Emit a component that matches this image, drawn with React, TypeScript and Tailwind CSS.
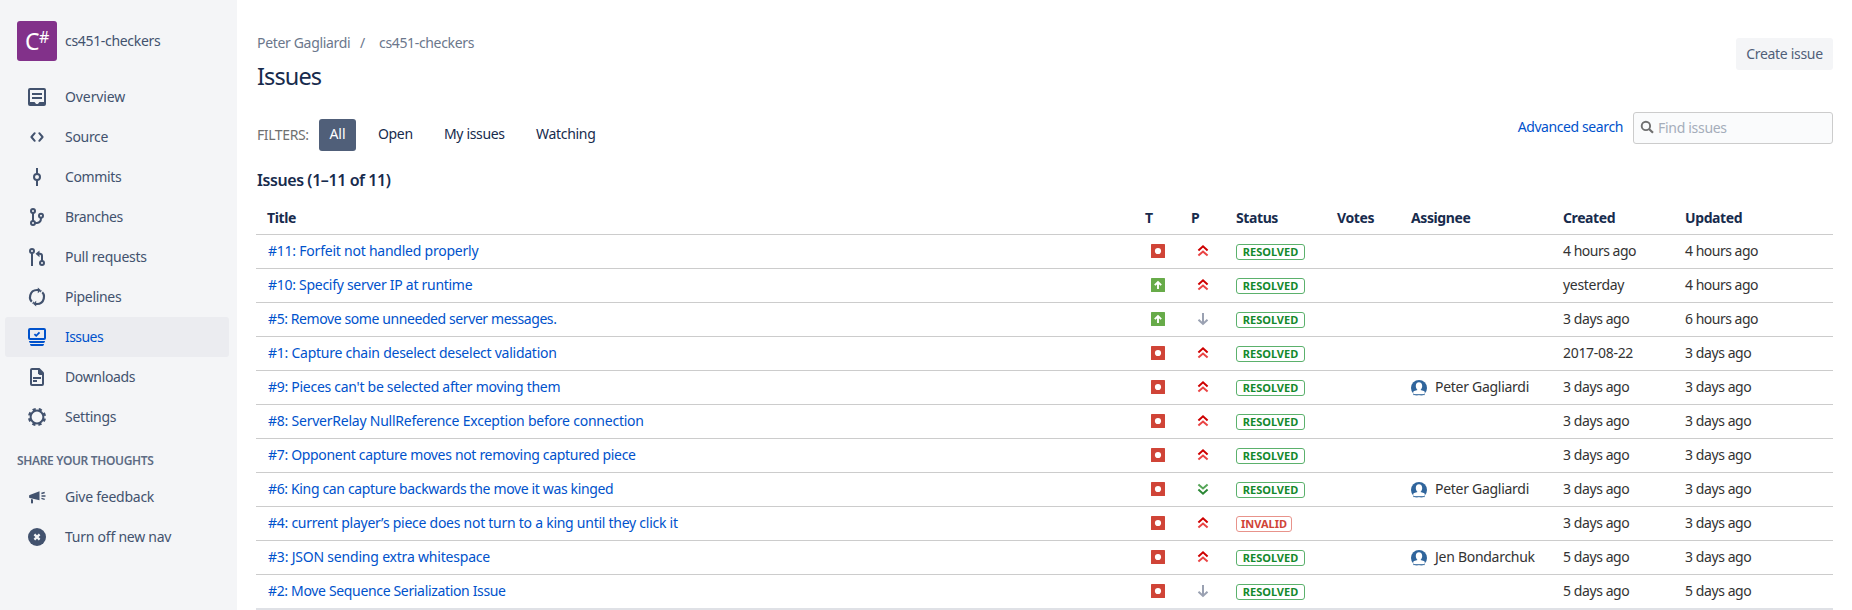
import type { ReactNode } from "react";

type Kind = "bug" | "enhancement";
type Priority = "major" | "minor" | "low";

interface Issue {
  title: string;
  kind: Kind;
  priority: Priority;
  status: "RESOLVED" | "INVALID";
  assignee?: string;
  created: string;
  updated: string;
  tracking: string;
}

const issues: Issue[] = [
  { title: "#11: Forfeit not handled properly", kind: "bug", priority: "major", status: "RESOLVED", created: "4 hours ago", updated: "4 hours ago", tracking: "tracking-[-0.23px]" },
  { title: "#10: Specify server IP at runtime", kind: "enhancement", priority: "major", status: "RESOLVED", created: "yesterday", updated: "4 hours ago", tracking: "tracking-[-0.28px]" },
  { title: "#5: Remove some unneeded server messages.", kind: "enhancement", priority: "minor", status: "RESOLVED", created: "3 days ago", updated: "6 hours ago", tracking: "tracking-[-0.41px]" },
  { title: "#1: Capture chain deselect deselect validation", kind: "bug", priority: "major", status: "RESOLVED", created: "2017-08-22", updated: "3 days ago", tracking: "tracking-[-0.25px]" },
  { title: "#9: Pieces can't be selected after moving them", kind: "bug", priority: "major", status: "RESOLVED", assignee: "Peter Gagliardi", created: "3 days ago", updated: "3 days ago", tracking: "tracking-[-0.28px]" },
  { title: "#8: ServerRelay NullReference Exception before connection", kind: "bug", priority: "major", status: "RESOLVED", created: "3 days ago", updated: "3 days ago", tracking: "tracking-[-0.23px]" },
  { title: "#7: Opponent capture moves not removing captured piece", kind: "bug", priority: "major", status: "RESOLVED", created: "3 days ago", updated: "3 days ago", tracking: "tracking-[-0.32px]" },
  { title: "#6: King can capture backwards the move it was kinged", kind: "bug", priority: "low", status: "RESOLVED", assignee: "Peter Gagliardi", created: "3 days ago", updated: "3 days ago", tracking: "tracking-[-0.35px]" },
  { title: "#4: current player’s piece does not turn to a king until they click it", kind: "bug", priority: "major", status: "INVALID", created: "3 days ago", updated: "3 days ago", tracking: "tracking-[-0.26px]" },
  { title: "#3: JSON sending extra whitespace", kind: "bug", priority: "major", status: "RESOLVED", assignee: "Jen Bondarchuk", created: "5 days ago", updated: "3 days ago", tracking: "tracking-[-0.2px]" },
  { title: "#2: Move Sequence Serialization Issue", kind: "bug", priority: "minor", status: "RESOLVED", created: "5 days ago", updated: "5 days ago", tracking: "tracking-[-0.34px]" },
];

const line = { fill: "none", stroke: "currentColor", strokeWidth: 2 } as const;

const navIcons: Record<string, ReactNode> = {
  overview: (
    <>
      <path fillRule="evenodd" fill="currentColor" d="M5 3h14a2 2 0 0 1 2 2v14a2 2 0 0 1-2 2H5a2 2 0 0 1-2-2V5a2 2 0 0 1 2-2zm0 2v12h4.200c.5 0 .8.3 1 .7.3.8 1 1.300 1.800 1.300s1.500-.5 1.800-1.300c.2-.4.5-.7 1-.7H19V5z" />
      <path {...line} d="M7 9h10M7 13h10" />
    </>
  ),
  source: <path {...line} strokeLinecap="round" strokeLinejoin="round" d="M9.700 8.200 6.400 12l3.300 3.800M14.300 8.200 17.600 12l-3.300 3.800" />,
  commits: (
    <>
      <circle {...line} cx="12" cy="12" r="3" />
      <path {...line} d="M12 3v6M12 15v6" />
    </>
  ),
  branches: (
    <>
      <circle {...line} cx="8" cy="6" r="2" />
      <circle {...line} cx="8" cy="18" r="2" />
      <circle {...line} cx="16" cy="10.800" r="2" />
      <path {...line} d="M8 8v8M16 13c0 3-1.300 4.800-4 4.900L10 18" />
    </>
  ),
  pulls: (
    <>
      <circle {...line} cx="7" cy="6" r="2" />
      <circle {...line} cx="17" cy="18" r="2" />
      <path {...line} d="M7 8v13M17 16v-5c0-1.500-.8-2.200-2.200-2.200H13" />
      <path fill="currentColor" d="M10.500 8.800 14.500 5.400v6.800z" />
    </>
  ),
  pipelines: (
    <>
      <path {...line} strokeWidth="2.200" d="M8.600 18.100A7 7 0 0 1 12 5h1M15.400 5.900A7 7 0 0 1 12 19h-1" />
      <path fill="currentColor" d="M16 5.200 12.800 2.400v5.800zM8 18.800l3.200-3v5.800z" />
      <path stroke="#f4f5f7" strokeWidth="1.300" d="m16 7.900 2.200-3M8 16.100l-2.200 3" />
    </>
  ),
  issues: (
    <>
      <rect {...line} x="4" y="4" width="16" height="10" rx="1" />
      <path {...line} strokeWidth="1.800" d="m9.400 9.100 1.800 1.700 3.300-3.500" />
      <path fill="currentColor" d="M4 16h16c0 1.200-.6 2-1.500 2h-13C4.600 18 4 17.200 4 16zM5 19h14c0 1.200-.7 2-1.500 2h-11C5.700 21 5 20.200 5 19z" />
    </>
  ),
  downloads: (
    <>
      <path {...line} strokeLinejoin="round" d="M13 4H7a1 1 0 0 0-1 1v14a1 1 0 0 0 1 1h10a1 1 0 0 0 1-1V9" />
      <path fill="currentColor" d="M13 3h1.500L19 7.500V10h-4.500L13 8.500z" />
      <path {...line} strokeLinecap="butt" d="M8 13h8M8 16h4" />
    </>
  ),
  settings: (
    <>
      <circle {...line} strokeWidth="2" cx="12" cy="12" r="6.400" />
      <circle {...line} strokeWidth="2.400" cx="12" cy="12" r="7.900" strokeDasharray="3.200 3.004" strokeDashoffset="-1.500" />
    </>
  ),
  feedback: (
    <>
      <path fill="currentColor" d="M14.500 6.200v9L4.700 13a.8.8 0 0 1-.6-.8v-1.400c0-.4.2-.7.6-.8zM6 14l2 .5v3.300a.8.8 0 0 1-.8.8H6.800a.8.8 0 0 1-.8-.8z" />
      <path {...line} strokeWidth="1.400" d="M16.500 11h4M16.400 8.500l3.300-1M16.400 13.400l3.300 1" />
    </>
  ),
  off: (
    <>
      <circle cx="12" cy="12" r="9" fill="currentColor" />
      <path d="m9.400 9.400 5.200 5.200m0-5.200-5.200 5.200" stroke="#f4f5f7" strokeWidth="2.200" fill="none" />
    </>
  ),
};

function NavItem({ icon, label, active, tracking }: { icon: string; label: string; active?: boolean; tracking: string }) {
  return (
    <a className={`ml-[5px] flex h-10 w-56 items-center rounded-[3px] pl-5 ${active ? "bg-[#ebecf0] text-[#0052cc]" : "text-[#42526e]"}`}>
      <svg viewBox="0 0 24 24" className="h-6 w-6 shrink-0">{navIcons[icon]}</svg>
      <span className={`ml-4 whitespace-nowrap leading-5 ${tracking}`}>{label}</span>
    </a>
  );
}

function KindIcon({ kind }: { kind: Kind }) {
  return (
    <svg viewBox="0 0 14 14" className="mt-[9px] ml-[6px] h-3.5 w-3.5">
      <rect width="14" height="14" rx="0.600" fill={kind === "bug" ? "#d04437" : "#67ab49"} />
      {kind === "bug" ? (
        <circle cx="7" cy="7" r="3.100" fill="#fff" />
      ) : (
        <path d="M7 11V4.500M3.800 7.200 7 4l3.200 3.200" fill="none" stroke="#fff" strokeWidth="1.900" />
      )}
    </svg>
  );
}

function PriorityIcon({ priority }: { priority: Priority }) {
  return (
    <svg viewBox="0 0 16 16" className="mt-2 ml-1 h-4 w-4" fill="none" strokeWidth="2">
      {priority === "major" && (
        <>
          <path d="M3.400 7.400 8 3.300l4.600 4.100" stroke="#ce0000" />
          <path d="M3.400 12.600 8 8.500l4.600 4.100" stroke="#ea4444" />
        </>
      )}
      {priority === "low" && (
        <>
          <path d="M3.400 3.400 8 7.500l4.600-4.100" stroke="#55a557" />
          <path d="M3.400 8.600 8 12.700l4.600-4.100" stroke="#2a8735" />
        </>
      )}
      {priority === "minor" && <path d="M8 2v11M3.500 8.800 8 13l4.500-4.200" stroke="#9aa1b2" />}
    </svg>
  );
}

function Avatar() {
  return (
    <svg viewBox="0 0 16 16" className="mt-[9px] h-4 w-4 shrink-0">
      <circle cx="8" cy="8" r="8" fill="#30659c" />
      <path fill="#fff" d="M8 2.300c2 0 3.200 1.500 3.200 3.600 0 1.700-.8 3.200-1.700 4l3.300 1.200c.7.300 1 .8 1 1.500v.9A8 8 0 0 1 8 16a8 8 0 0 1-5.800-2.500v-.9c0-.7.300-1.200 1-1.500l3.300-1.200c-.9-.8-1.700-2.300-1.700-4 0-2.100 1.200-3.600 3.200-3.600z" />
      <path d="M2.200 14.600h11.600" stroke="#30659c" strokeWidth="0.900" />
    </svg>
  );
}

function dateTracking(text: string) {
  if (text.includes("hours")) return "tracking-[-0.5px]";
  return text.includes("days") ? "tracking-[-0.42px]" : "tracking-[-0.3px]";
}

const columns = "grid grid-cols-[889px_46px_45px_101px_74px_152px_122px_148px] whitespace-nowrap";

export default function App() {
  return (
    <div className="flex h-[610px] w-[1852px] overflow-hidden bg-white font-['Noto_Sans',sans-serif] text-sm leading-5">
      <nav className="h-full w-[237px] shrink-0 bg-[#f4f5f7] pt-[21px]">
        <div className="ml-[17px] flex h-10 items-center text-[#42526e]">
          <div className="relative h-10 w-10 rounded-[3px] bg-[#82318a] text-white">
            <span className="absolute top-[5px] left-[8px] text-[23px] leading-[30px]">C</span>
            <span className="absolute top-[6px] left-[22px] text-[16px] leading-[20px] tracking-[-1px]">#</span>
          </div>
          <span className="ml-2 tracking-[-0.32px]">cs451-checkers</span>
        </div>
        <div className="mt-4">
          <NavItem icon="overview" label="Overview" tracking="tracking-[-0.1px]" />
          <NavItem icon="source" label="Source" tracking="tracking-[-0.3px]" />
          <NavItem icon="commits" label="Commits" tracking="tracking-[-0.35px]" />
          <NavItem icon="branches" label="Branches" tracking="tracking-[-0.4px]" />
          <NavItem icon="pulls" label="Pull requests" tracking="tracking-[-0.25px]" />
          <NavItem icon="pipelines" label="Pipelines" tracking="tracking-[-0.3px]" />
          <NavItem icon="issues" label="Issues" active tracking="tracking-[-0.55px]" />
          <NavItem icon="downloads" label="Downloads" tracking="tracking-[-0.35px]" />
          <NavItem icon="settings" label="Settings" tracking="tracking-[-0.25px]" />
        </div>
        <div className="flex h-10 items-end pb-[6px] pl-[17px] text-xs leading-5 font-semibold tracking-[-0.34px] text-[#5e6c84]">SHARE YOUR THOUGHTS</div>
        <NavItem icon="feedback" label="Give feedback" tracking="tracking-[-0.25px]" />
        <NavItem icon="off" label="Turn off new nav" tracking="tracking-[-0.24px]" />
      </nav>

      <main className="ml-[19px] w-[1577px]">
        <header className="flex h-[110px] justify-between">
          <div className="pt-[33px]">
            <div className="flex text-[#6b778c]">
              <span className="w-[104px] pl-[1px] tracking-[-0.33px]">Peter Gagliardi</span>
              <span className="w-[19px]">/</span>
              <span className="tracking-[-0.34px]">cs451-checkers</span>
            </div>
            <h1 className="mt-[7px] pl-[1px] text-[23.5px] leading-8 tracking-[-0.9px] text-[#172b4d]">Issues</h1>
          </div>
          <button className="mt-[38px] h-8 w-[97px] rounded-[3px] bg-[#f4f5f7] tracking-[-0.3px] text-[#505f79]">Create issue</button>
        </header>

        <div className="flex h-[57px] justify-between">
          <div className="flex pt-[9px] text-[#172b4d]">
            <span className="mt-[6px] w-[63px] pl-[1px] tracking-[-0.4px] text-[#707070]">FILTERS:</span>
            <span className="h-8 w-[37px] rounded-[3px] bg-[#505f79] pt-[5px] text-center text-white">All</span>
            <span className="w-[66px] pt-[5px] pl-[22px] tracking-[-0.35px]">Open</span>
            <span className="w-[92px] pt-[5px] pl-[22px] tracking-[-0.35px]">My issues</span>
            <span className="pt-[5px] pl-[22px] tracking-[-0.3px]">Watching</span>
          </div>
          <div className="flex pt-[2px]">
            <a className="mt-[5px] mr-[10px] tracking-[-0.4px] text-[#0052cc]">Advanced search</a>
            <div className="flex h-8 w-[200px] rounded-[3px] border border-[#ccc] bg-[#fafbfc] text-[#a5adba]">
              <svg viewBox="0 0 14 14" className="mt-[7px] ml-[6px] h-3.5 w-3.5 shrink-0" fill="none" stroke="#707070" strokeWidth="1.900">
                <circle cx="5.900" cy="5.900" r="4.200" />
                <path d="m9 9 4 3.800" strokeWidth="2.200" />
              </svg>
              <span className="mt-[5px] ml-[4px] tracking-[-0.3px]">Find issues</span>
            </div>
          </div>
        </div>

        <h2 className="h-[41px] pt-[3px] pl-[1px] text-base leading-5 font-semibold tracking-[-0.42px] text-[#172b4d]">Issues (1–11 of 11)</h2>

        <div className="border-b-2 border-[#dfe1e6]">
          <div className={`${columns} h-[27px] border-b border-[#ccc] font-bold tracking-[-0.4px] text-[#172b4d]`}>
            <span className="pl-[11px]">Title</span>
            <span>T</span>
            <span>P</span>
            <span>Status</span>
            <span>Votes</span>
            <span>Assignee</span>
            <span>Created</span>
            <span>Updated</span>
          </div>
          {issues.map((issue) => (
            <div key={issue.title} className={`${columns} h-[34px] border-b border-[#ccc] text-[#333] last:h-[33px] last:border-b-0`}>
              <a className={`pt-[6px] pl-3 text-[#0052cc] ${issue.tracking}`}>{issue.title}</a>
              <KindIcon kind={issue.kind} />
              <PriorityIcon priority={issue.priority} />
              <span
                className={`mt-[9px] h-4 justify-self-start rounded-[3px] border text-center text-[11px] leading-[14px] font-bold ${
                  issue.status === "RESOLVED" ? "w-[69px] border-[#5bb16c] text-[#14892c]" : "w-[56px] border-[#e8938b] text-[#d04437]"
                }`}
              >
                {issue.status}
              </span>
              <span />
              <span className="flex">
                {issue.assignee && (
                  <>
                    <Avatar />
                    <span className="mt-[6px] ml-2 tracking-[-0.28px]">{issue.assignee}</span>
                  </>
                )}
              </span>
              <span className={`pt-[6px] ${dateTracking(issue.created)}`}>{issue.created}</span>
              <span className={`pt-[6px] ${dateTracking(issue.updated)}`}>{issue.updated}</span>
            </div>
          ))}
        </div>
      </main>
    </div>
  );
}
